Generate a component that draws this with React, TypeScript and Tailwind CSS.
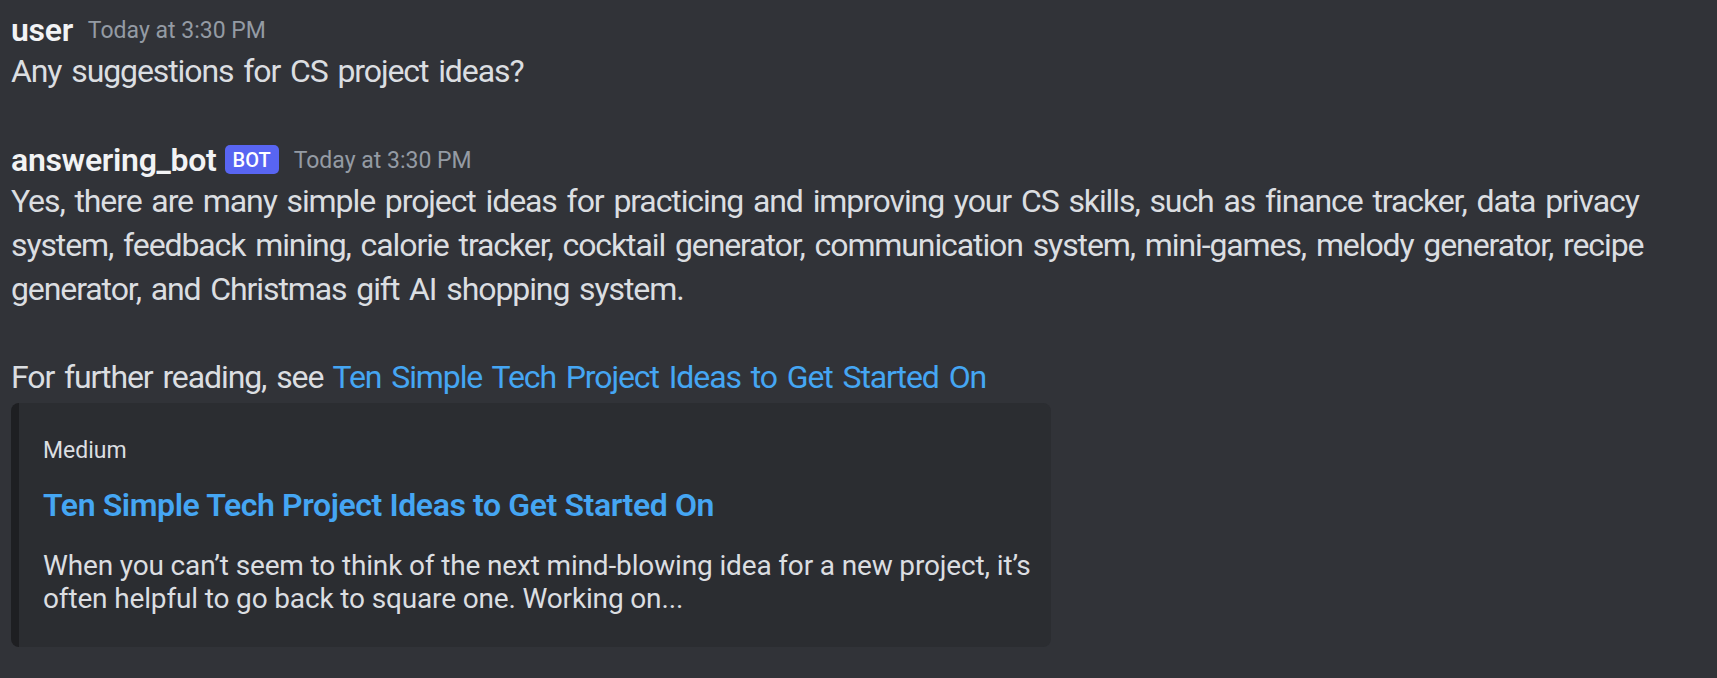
import React from "react";

const body =
  "Yes, there are many simple project ideas for practicing and improving your CS skills, such as finance tracker, data privacy system, feedback mining, calorie tracker, cocktail generator, communication system, mini-games, melody generator, recipe generator, and Christmas gift AI shopping system.";

function Header({ name, bot }: { name: string; bot?: boolean }) {
  return (
    <div className="flex h-[44px] items-center pt-[5px]">
      <span className="text-[32px] font-semibold tracking-[-0.3px] text-[#f2f3f5]">{name}</span>
      {bot && (
        <span className="ml-[8px] flex h-[29px] items-center rounded-[5px] bg-[#5865f2] px-[8px] text-[20px] font-medium text-white">
          BOT
        </span>
      )}
      <span className="ml-[15px] mt-[4px] text-[23px] text-[#949ba4]">Today at 3:30 PM</span>
    </div>
  );
}

export default function App() {
  return (
    <div
      className="h-screen w-full overflow-hidden bg-[#313338] pl-[11px] pt-[1px] text-[#dbdee1]"
      style={{ fontFamily: "Roboto, 'Noto Sans', sans-serif" }}
    >
      <div className="py-[4px]">
        <Header name="user" />
        <p className="text-[32px] leading-[44px] tracking-[-1.1px] [word-spacing:3px]">
          Any suggestions for CS project ideas?
        </p>
      </div>

      <div className="mt-[34px] py-[4px]">
        <Header name="answering_bot" bot />
        <div className="max-w-[1690px] text-[32px] leading-[44px] tracking-[-1.1px] [word-spacing:3px]">
          <p>{body}</p>
          <p className="mt-[44px]">
            For further reading, see{" "}
            <a className="text-[#45a6f3]">Ten Simple Tech Project Ideas to Get Started On</a>
          </p>
        </div>

        <div className="mt-[4px] w-[1040px] rounded-[8px] border-l-[8px] border-[#1e1f22] bg-[#2b2d31] pb-[32px] pl-[24px] pr-[8px] pt-[32px]">
          <div className="text-[23px] leading-[32px] text-[#dbdee1]">Medium</div>
          <div className="mt-[16px] text-[32px] font-semibold leading-[44px] tracking-[-0.4px] text-[#45a6f3]">
            Ten Simple Tech Project Ideas to Get Started On
          </div>
          <p className="mt-[22px] text-[28px] leading-[33px] tracking-[-0.15px] text-[#dbdee1]">
            When you can’t seem to think of the next mind-blowing idea for a new project, it’s often helpful to go back
            to square one. Working on...
          </p>
        </div>
      </div>
    </div>
  );
}
